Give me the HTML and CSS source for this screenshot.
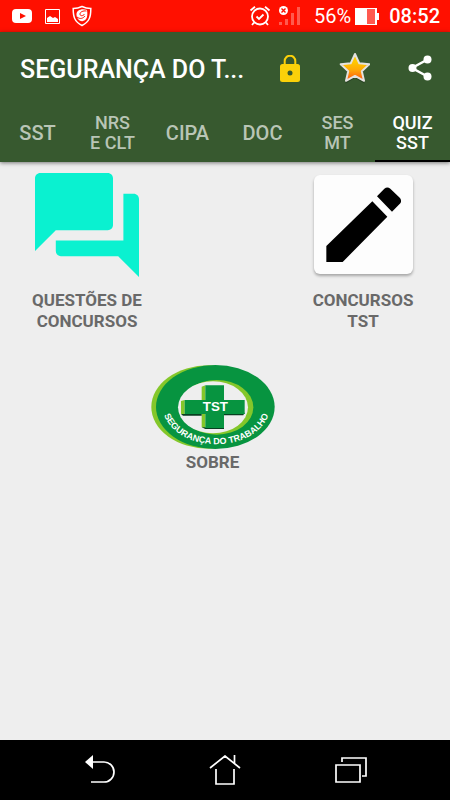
FILE: index.html
```html
<!DOCTYPE html>
<html lang="pt-BR">
<head>
<meta charset="utf-8">
<meta name="viewport" content="width=device-width, initial-scale=1">
<title>Segurança do Trabalho</title>
<link rel="stylesheet" href="styles.css">
</head>
<body>
<div class="status">
  <div class="status-group">
    <svg width="21" height="14" viewBox="0 0 21 14"><rect width="20" height="14" rx="4" fill="#fff"/><path d="M8 4l6 3-6 3z" fill="#ff1000"/></svg>
    <svg width="15" height="15" viewBox="0 0 15 15"><path d="M.5.500h14v14H.5z" fill="none" stroke="#fff"/><path d="M2 13V9l3-2 3 2 2-1 3 2v3z" fill="#fff"/></svg>
    <svg width="20" height="22" viewBox="0 0 20 22"><path d="M10 1.500C7 3 4 3.500 1.200 3.500c0 8 1 13 8.800 17 7.800-4 8.800-9 8.800-17C16 3.500 13 3 10 1.500z" fill="none" stroke="#fff" stroke-width="1.500"/><path d="M15 5c-5-2-11 0-10.500 5 .3 4 4 7 6.500 6 4-1 5-5 4-11z" fill="#fff"/><path d="M14.500 6C11 5.500 8 7 8 9c0 2.500 3.500 2 4.500 0M5 12c3 2.500 6 1.500 8-1" fill="none" stroke="#ff1000" stroke-width="1"/></svg>
  </div>
  <div class="status-group status-right">
    <svg width="22" height="22" viewBox="0 0 22 22" fill="none" stroke="#fff" stroke-width="1.800"><circle cx="11" cy="11.500" r="8"/><path d="M1.500 5.500L6 1.700M20.500 5.500L16 1.700M7.500 11.500l2.500 2.500 4.500-4.500M5 17.500L3 20M17 17.500l2 2.500"/></svg>
    <svg class="signal" width="21" height="20" viewBox="0 0 21 20"><g fill="#ff5a4e"><path d="M0 16h3v3H0zM6 13h3v6H6zM12 7h3v12h-3zM18 1h3v18h-3z"/></g><circle cx="4.500" cy="4.500" r="4.500" fill="#fff"/><path d="M2.500 2.500l4 4m0-4l-4 4" stroke="#ff1000" stroke-width="1.400"/></svg>
    <span class="percent">56%</span>
    <svg class="battery" width="24" height="17" viewBox="0 0 24 17"><path d="M0 0h22v5h2v7h-2v5H0z" fill="#fff"/><path d="M12 1h8v15h-8z" fill="#ff5a50"/></svg>
    <span class="time">08:52</span>
  </div>
</div>
<header class="appbar">
  <div class="toolbar">
    <h1>SEGURANÇA DO T...</h1>
    <div class="actions">
      <button aria-label="Desbloquear"><svg width="20" height="27" viewBox="0 0 20 27"><path d="M4.700 10V6a5.300 5.300 0 0 1 10.600 0v4" fill="none" stroke="#fbd10a" stroke-width="2"/><rect y="9" width="20" height="18" rx="2.500" fill="#fbd10a"/><circle cx="10" cy="18" r="2.500" fill="#37592f"/></svg></button>
      <button aria-label="Avaliar"><svg width="32" height="32" viewBox="0 0 32 32"><defs><linearGradient id="gold" x2="0" y2="1"><stop offset=".3" stop-color="#ffc800"/><stop offset=".6" stop-color="#ffa808"/><stop offset="1" stop-color="#ff5210"/></linearGradient></defs><path d="M17 3l4 10 11 .5-8.500 7.500 3 10.500L17 26l-9.500 5.500 3-10.500L2 13.500l11-.5z" fill="#1c301a" opacity=".6"/><path d="M17 2l4.300 9.300 10 1-7.500 6.900 2.200 9.600-9-4.900-9 4.900 2.200-9.600-7.500-6.900 10-1z" fill="url(#gold)" stroke="#e4e2df" stroke-width="2" stroke-linejoin="round"/></svg></button>
      <button aria-label="Compartilhar"><svg width="24" height="26" viewBox="0 0 24 26"><path d="M19.500 4.500L4 13l15.500 8.500" fill="none" stroke="#fff" stroke-width="2.500"/><g fill="#fff"><circle cx="19.500" cy="4.500" r="4"/><circle cx="4.500" cy="13" r="4"/><circle cx="19.500" cy="21.500" r="4"/></g></svg></button>
    </div>
  </div>
  <nav class="tabs">
    <button class="tab">SST</button>
    <button class="tab tab-small">NRS<br>E CLT</button>
    <button class="tab">CIPA</button>
    <button class="tab">DOC</button>
    <button class="tab tab-small">SES<br>MT</button>
    <button class="tab tab-small active">QUIZ<br>SST</button>
  </nav>
</header>
<main>
  <div class="row">
    <a class="item" href="#questoes">
      <span class="picture"><svg width="104" height="104" viewBox="2 2 20 20"><path fill="#0af1d0" d="M21 6h-2v9H6v2c0 .55.45 1 1 1h11l4 4V7c0-.55-.45-1-1-1zm-4 6V3c0-.55-.45-1-1-1H3c-.55 0-1 .45-1 1v14l4-4h10c.55 0 1-.45 1-1z"/></svg></span>
      QUESTÕES DE<br>CONCURSOS
    </a>
    <a class="item" href="#concursos">
      <span class="picture"><span class="card"><svg width="99" height="99" viewBox="42 30 297 297"><path d="M79 243L217 109l45 46-134 136H79zM231 94l22-23q9-7 18 0l29 28q6 8 1 16l-25 25z"/></svg></span></span>
      CONCURSOS<br>TST
    </a>
  </div>
  <div class="row row-center">
    <a class="item" href="#sobre">
      <svg class="logo" width="124" height="85" viewBox="33 27 372 255">
        <defs><path id="arc" d="M68 164C102 298 356 298 390 164"/></defs>
        <ellipse cx="206" cy="153" rx="172" ry="125" fill="#84c72a"/>
        <ellipse cx="226" cy="153" rx="178" ry="126" fill="#079440"/>
        <ellipse cx="230" cy="154" rx="110" ry="82" fill="#84c72a"/>
        <ellipse cx="219" cy="154" rx="105" ry="78" fill="#eee"/>
        <path d="M185 92l11-4v45h-11zM123 135l11-3v42h-11zM185 174h11v43l-11-3z" fill="#84c72a"/>
        <path d="M123 174h62v5h-56zM185 214l11 5h56v-4zM252 174h62v-5l-4 9h-58z" fill="#073f20"/>
        <path d="M196 88h56v44h62v42h-62v42h-56v-42h-62v-42h62z" fill="#079440"/>
        <text class="logo-name" x="226" y="166">TST</text>
        <text class="logo-ring"><textPath href="#arc" startOffset="50%">SEGURANÇA DO TRABALHO</textPath></text>
      </svg>
      SOBRE
    </a>
  </div>
</main>
<footer class="navbar">
  <button aria-label="Voltar"><svg width="30" height="30" viewBox="0 0 30 30"><path d="M7 7h12a10 10 0 0 1 0 20H6" fill="none" stroke="#fff" stroke-width="1.700"/><path d="M0 7l8-7v14z" fill="#fff"/></svg></button>
  <button aria-label="Início"><svg width="32" height="30" viewBox="0 0 32 30" fill="none" stroke="#fff" stroke-width="1.700"><path d="M1 13L16 1l15 12M25.500 8V0M7 14v15h18V14"/></svg></button>
  <button aria-label="Recentes"><svg width="32" height="26" viewBox="0 0 32 26" fill="none" stroke="#fff" stroke-width="1.700"><path d="M1 8h24v17H1zM7 5V1h24v18h-4"/></svg></button>
</footer>
</body>
</html>
```
FILE: styles.css
```css
* {
  box-sizing: border-box;
}

body {
  margin: 0;
  min-height: 100vh;
  display: flex;
  flex-direction: column;
  background: #eee;
  font-family: Roboto, "Liberation Sans", sans-serif;
}

svg {
  display: block;
  flex: none;
}

button {
  border: 0;
  padding: 0;
  background: none;
  color: inherit;
  font: inherit;
}

.status {
  height: 32px;
  padding: 0 10px 0 12px;
  display: flex;
  align-items: center;
  justify-content: space-between;
  background: #ff1000;
  color: #fff;
}

.status-group {
  display: flex;
  align-items: center;
  gap: 12px;
}

.status-right {
  gap: 8px;
}

.percent {
  margin-left: 6px;
  font-size: 20px;
}

.battery {
  margin-left: -4px;
}

.time {
  margin-left: 2px;
  font-size: 20px;
  font-weight: 500;
}

.appbar {
  position: relative;
  background: #37592f;
  color: #fff;
  box-shadow: 0 1px 4px rgba(0, 0, 0, 0.5);
}

.toolbar {
  height: 72px;
  padding: 0 18px 0 20px;
  display: flex;
  align-items: center;
  justify-content: space-between;
}

h1 {
  margin: 0;
  padding-top: 4px;
  white-space: nowrap;
  font-size: 25px;
  line-height: 32px;
  font-weight: 500;
}

.actions {
  display: flex;
  align-items: center;
  gap: 38px;
}

.tabs {
  display: grid;
  grid-template-columns: repeat(6, 1fr);
}

.tab {
  height: 58px;
  padding-top: 2px;
  color: #b9c5b6;
  font-size: 20px;
  line-height: 20px;
  font-weight: 500;
  border-bottom: 2px solid transparent;
}

.tab-small {
  font-size: 18px;
}

.active {
  color: #fff;
  border-bottom-color: #000;
}

main {
  flex: 1;
  padding: 11px 24px;
}

.row {
  display: flex;
  justify-content: space-between;
}

.row-center {
  justify-content: center;
  padding: 33px 25px 0 0;
}

.item {
  min-width: 126px;
  display: block;
  color: #696969;
  font-size: 17px;
  line-height: 21px;
  font-weight: 700;
  text-align: center;
  text-decoration: none;
}

.picture {
  height: 117px;
  display: flex;
  justify-content: center;
  align-items: flex-start;
}

.card {
  margin-top: 2px;
  border-radius: 6px;
  background: #fdfdfd;
  box-shadow: 0 2px 3px rgba(0, 0, 0, 0.3);
}

.logo {
  margin: 0 auto 2px;
}

.logo-name,
.logo-ring {
  fill: #fff;
  font-family: "Liberation Sans", sans-serif;
  font-weight: 700;
  text-anchor: middle;
}

.logo-name {
  font-size: 40px;
}

.logo-ring {
  font-size: 27px;
}

.navbar {
  height: 60px;
  padding: 0 83px 0 85px;
  display: flex;
  align-items: center;
  justify-content: space-between;
  background: #000;
}
```
